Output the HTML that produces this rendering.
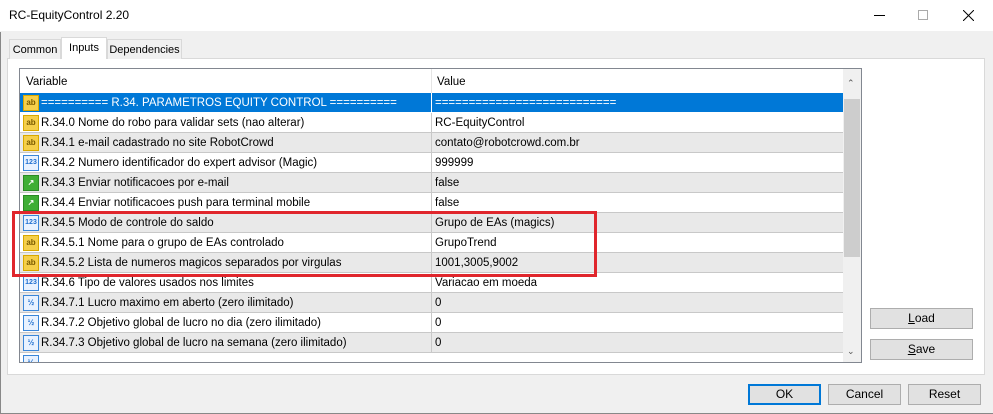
<!DOCTYPE html>
<html><head><meta charset="utf-8"><style>
*{box-sizing:border-box;margin:0;padding:0}
body{width:993px;height:414px;background:#f0f0f0;font-family:"Liberation Sans",Arial,sans-serif;font-size:12px;color:#000;position:relative;overflow:hidden}
.abs{position:absolute}
.title{left:0;top:0;width:993px;height:32px;background:#fff;border-bottom:1px solid #f0f0f0}
.title span{position:absolute;left:9px;top:8px;font-size:12px}
.tab{top:39px;height:20px;border:1px solid #d9d9d9;border-bottom:none;background:#f0f0f0;padding:4px 0 0;text-align:center;white-space:nowrap;font-size:11px}
.panel{left:7px;top:58px;width:978px;height:317px;background:#fff;border:1px solid #d9d9d9}
.list{left:19px;top:68px;width:843px;height:295px;border:1px solid #828790;background:#fff;overflow:hidden}
.row{position:absolute;left:0;width:823px;height:20px;border-bottom:1px solid #c8c8c8}
.row .n{position:absolute;left:21px;top:4px;white-space:nowrap;font-size:11.5px}
.row .v{position:absolute;left:415px;top:4px;white-space:nowrap;font-size:11.5px}
.row .sep{position:absolute;left:411px;top:0;width:1px;height:20px;background:#c8c8c8}
.ic{position:absolute;left:3px;top:2px;width:16px;height:16px;font-size:8px;font-weight:bold;text-align:center;line-height:14px}
.ab{background:#f5cf4a;border:1px solid #d8a800;color:#7a5a00}
.n123{background:#e8f2ff;border:1px solid #3a86d8;color:#1e6fd0;font-size:7px}
.bool{background:#3fae35;border:1px solid #2a8a22;color:#fff}
.half{background:#e8f2ff;border:1px solid #3a86d8;color:#1e6fd0;font-size:8px}
.btn{height:21px;border:1px solid #adadad;background:#e1e1e1;text-align:center;line-height:19px}
</style></head><body>
<div class="abs title"><span>RC-EquityControl 2.20</span>
<div class="abs" style="left:874px;top:15px;width:11px;height:1px;background:#000"></div>
<div class="abs" style="left:918px;top:10px;width:10px;height:10px;border:1px solid #aaa"></div>
<svg class="abs" style="left:963px;top:10px" width="11" height="11"><path d="M0 0L11 11M11 0L0 11" stroke="#000" stroke-width="1"/></svg>
</div>
<div class="abs" style="left:0;top:32px;width:1px;height:382px;background:#888"></div>
<div class="abs" style="left:0;top:413px;width:993px;height:1px;background:#888"></div>
<div class="abs panel"></div>
<div class="abs tab" style="left:9px;width:52px">Common</div>
<div class="abs tab" style="left:61px;top:37px;height:22px;width:46px;background:#fff;padding-top:4px">Inputs</div>
<div class="abs tab" style="left:107px;width:75px">Dependencies</div>
<div class="abs list">
<div class="abs" style="left:0;top:0;width:823px;height:24px"><span class="abs" style="left:6px;top:7px;font-size:11.5px">Variable</span><div class="abs" style="left:411px;top:0;width:1px;height:24px;background:#e5e5e5"></div><span class="abs" style="left:417px;top:7px;font-size:11.5px">Value</span></div>
<div class="row" style="top:24px;background:#0078d7;color:#fff;border-bottom:1px solid #fff"><div class="ic ab">ab</div><span class="n">========== R.34. PARAMETROS EQUITY CONTROL ==========</span><div class="sep" style="background:#fff"></div><span class="v">===========================</span></div>
<div class="row" style="top:44px"><div class="ic ab">ab</div><span class="n">R.34.0 Nome do robo para validar sets (nao alterar)</span><div class="sep"></div><span class="v">RC-EquityControl</span></div>
<div class="row" style="top:64px;background:#e9e9e9"><div class="ic ab">ab</div><span class="n">R.34.1 e-mail cadastrado no site RobotCrowd</span><div class="sep"></div><span class="v">contato@robotcrowd.com.br</span></div>
<div class="row" style="top:84px"><div class="ic n123">123</div><span class="n">R.34.2 Numero identificador do expert advisor (Magic)</span><div class="sep"></div><span class="v">999999</span></div>
<div class="row" style="top:104px;background:#e9e9e9"><div class="ic bool">↗</div><span class="n">R.34.3 Enviar notificacoes por e-mail</span><div class="sep"></div><span class="v">false</span></div>
<div class="row" style="top:124px"><div class="ic bool">↗</div><span class="n">R.34.4 Enviar notificacoes push para terminal mobile</span><div class="sep"></div><span class="v">false</span></div>
<div class="row" style="top:144px;background:#e9e9e9"><div class="ic n123">123</div><span class="n">R.34.5 Modo de controle do saldo</span><div class="sep"></div><span class="v">Grupo de EAs (magics)</span></div>
<div class="row" style="top:164px"><div class="ic ab">ab</div><span class="n">R.34.5.1 Nome para o grupo de EAs controlado</span><div class="sep"></div><span class="v">GrupoTrend</span></div>
<div class="row" style="top:184px;background:#e9e9e9"><div class="ic ab">ab</div><span class="n">R.34.5.2 Lista de numeros magicos separados por virgulas</span><div class="sep"></div><span class="v">1001,3005,9002</span></div>
<div class="row" style="top:204px"><div class="ic n123">123</div><span class="n">R.34.6 Tipo de valores usados nos limites</span><div class="sep"></div><span class="v">Variacao em moeda</span></div>
<div class="row" style="top:224px;background:#e9e9e9"><div class="ic half">½</div><span class="n">R.34.7.1 Lucro maximo em aberto (zero ilimitado)</span><div class="sep"></div><span class="v">0</span></div>
<div class="row" style="top:244px"><div class="ic half">½</div><span class="n">R.34.7.2 Objetivo global de lucro no dia (zero ilimitado)</span><div class="sep"></div><span class="v">0</span></div>
<div class="row" style="top:264px;background:#e9e9e9"><div class="ic half">½</div><span class="n">R.34.7.3 Objetivo global de lucro na semana (zero ilimitado)</span><div class="sep"></div><span class="v">0</span></div>
<div class="row" style="top:284px"><div class="ic half">½</div></div>
<div class="abs" style="left:823px;top:0;width:18px;height:293px;background:#f0f0f0"></div>
<div class="abs" style="left:824px;top:30px;width:16px;height:158px;background:#cdcdcd"></div>
<div class="abs" style="left:827px;top:9px;font-size:9px;color:#555">⌃</div>
<div class="abs" style="left:827px;top:277px;font-size:9px;color:#555">⌄</div>
</div>
<div class="abs" style="left:12px;top:211px;width:585px;height:66px;border:3px solid #e0262c"></div>
<div class="abs btn" style="left:870px;top:308px;width:103px"><u>L</u>oad</div>
<div class="abs btn" style="left:870px;top:339px;width:103px"><u>S</u>ave</div>
<div class="abs btn" style="left:748px;top:384px;width:73px;border:2px solid #0078d7;line-height:17px">OK</div>
<div class="abs btn" style="left:828px;top:384px;width:73px">Cancel</div>
<div class="abs btn" style="left:908px;top:384px;width:73px">Reset</div>
</body></html>
